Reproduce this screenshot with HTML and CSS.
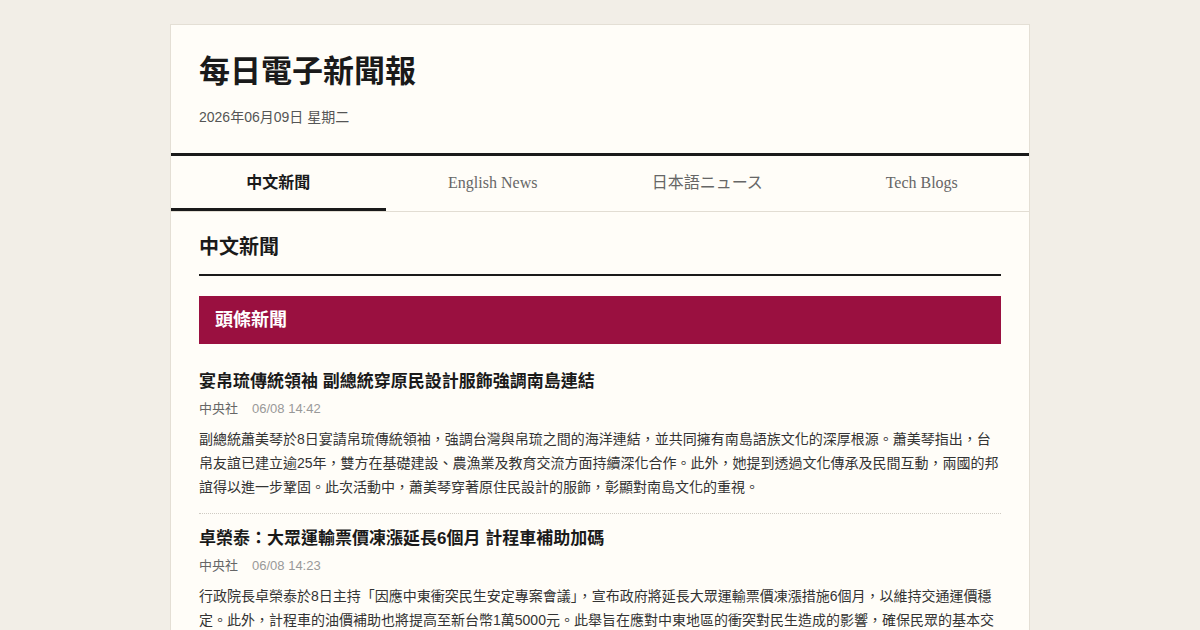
FILE: index.html
```html
<!DOCTYPE html>
<html lang="zh-Hant">
<head>
<meta charset="utf-8">
<title>每日電子新聞報</title>
<link rel="stylesheet" href="styles.css">
</head>
<body>
<div class="paper">
  <header class="masthead">
    <h1 class="site-title">每日電子新聞報</h1>
    <div class="site-date">2026年06月09日 星期二</div>
  </header>
  <nav class="tabs">
    <a class="tab active">中文新聞</a>
    <a class="tab">English News</a>
    <a class="tab">日本語ニュース</a>
    <a class="tab">Tech Blogs</a>
  </nav>
  <main class="content">
    <h2 class="section-title">中文新聞</h2>
    <div class="category">頭條新聞</div>
    <article class="story">
      <h3 class="story-title">宴帛琉傳統領袖 副總統穿原民設計服飾強調南島連結</h3>
      <div class="meta"><span class="source">中央社</span><span class="time">06/08 14:42</span></div>
      <p class="summary">副總統蕭美琴於8日宴請帛琉傳統領袖，強調台灣與帛琉之間的海洋連結，並共同擁有南島語族文化的深厚根源。蕭美琴指出，台帛友誼已建立逾25年，雙方在基礎建設、農漁業及教育交流方面持續深化合作。此外，她提到透過文化傳承及民間互動，兩國的邦誼得以進一步鞏固。此次活動中，蕭美琴穿著原住民設計的服飾，彰顯對南島文化的重視。</p>
    </article>
    <article class="story">
      <h3 class="story-title">卓榮泰：大眾運輸票價凍漲延長6個月 計程車補助加碼</h3>
      <div class="meta"><span class="source">中央社</span><span class="time">06/08 14:23</span></div>
      <p class="summary">行政院長卓榮泰於8日主持「因應中東衝突民生安定專案會議」，宣布政府將延長大眾運輸票價凍漲措施6個月，以維持交通運價穩定。此外，計程車的油價補助也將提高至新台幣1萬5000元。此舉旨在應對中東地區的衝突對民生造成的影響，確保民眾的基本交通需求不受衝擊。</p>
    </article>
  </main>
</div>
</body>
</html>
```
FILE: styles.css
```css
html, body {
  margin: 0;
  padding: 0;
}
body {
  background: #f2eee7;
  font-family: "Liberation Sans", "Noto Sans CJK TC", sans-serif;
  color: #1a1a1a;
  padding-top: 24px;
}
.paper {
  width: 858px;
  margin: 0 auto;
  background: #fffdf8;
  border: 1px solid #e4dfd5;
  border-bottom: none;
  min-height: 620px;
}
.masthead {
  padding: 28px 28px 25px;
}
.site-title {
  margin: 0;
  font-size: 31px;
  line-height: 38px;
  font-weight: 700;
  color: #1a1a1a;
}
.site-date {
  margin-top: 16px;
  font-size: 14px;
  line-height: 21px;
  color: #555;
}
.tabs {
  display: grid;
  grid-template-columns: repeat(4, 1fr);
  border-top: 3px solid #1a1a1a;
  border-bottom: 1px solid #e2ddd3;
}
.tab {
  display: block;
  text-align: center;
  padding: 17px 0 15px;
  font-family: "Liberation Serif", "Noto Sans CJK TC", serif;
  font-size: 16px;
  line-height: 20px;
  color: #666;
  border-bottom: 3px solid transparent;
}
.tab.active {
  font-family: "Liberation Sans", "Noto Sans CJK TC", sans-serif;
  font-weight: 700;
  color: #1a1a1a;
  border-bottom-color: #1a1a1a;
}
.content {
  padding: 21px 28px 0;
}
.section-title {
  margin: 0;
  font-size: 20px;
  line-height: 28px;
  font-weight: 700;
  padding-bottom: 13px;
  border-bottom: 2px solid #1a1a1a;
}
.category {
  margin-top: 20px;
  margin-bottom: 13px;
  background: #9a1040;
  color: #fff;
  font-size: 18px;
  font-weight: 700;
  line-height: 24px;
  padding: 12px 16px;
}
.story {
  padding: 12px 0 14px;
  border-bottom: 1px dotted #cfcbc3;
}
.story-title {
  margin: 0;
  font-size: 17px;
  line-height: 25px;
  font-weight: 700;
  color: #1a1a1a;
}
.meta {
  margin-top: 5px;
  font-size: 13px;
  line-height: 20px;
}
.source {
  color: #666;
}
.time {
  color: #999;
  margin-left: 14px;
}
.summary {
  margin: 8px 0 0;
  font-size: 14px;
  line-height: 24px;
  color: #333;
}
```
